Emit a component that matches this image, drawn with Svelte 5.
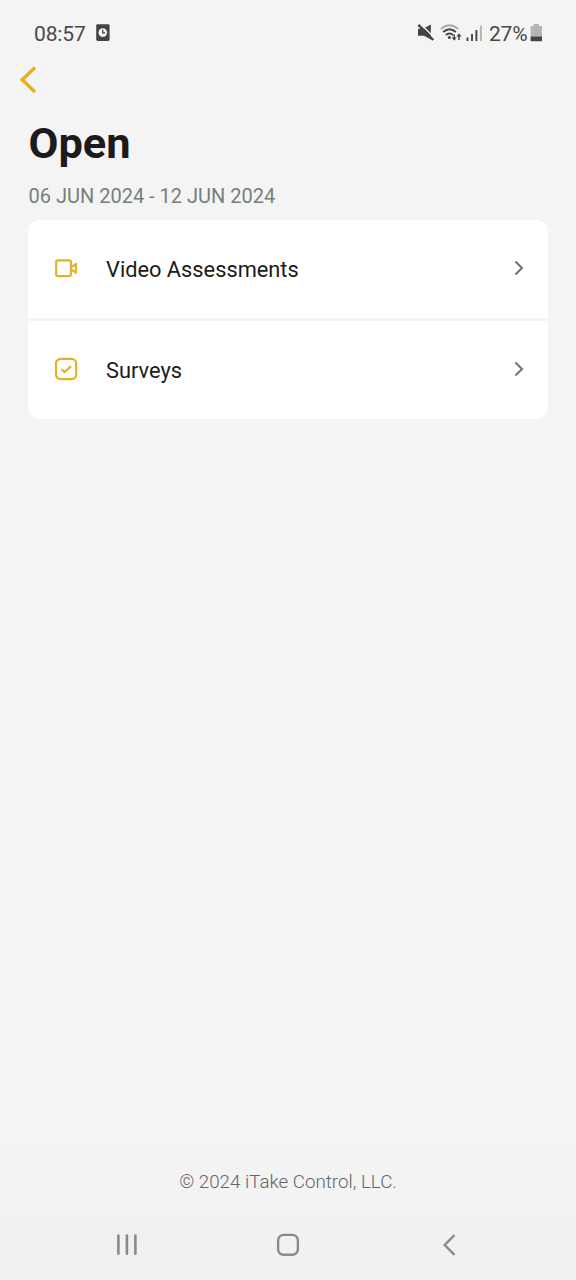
<script>
  const items = [
    { label: 'Video Assessments', icon: 'video' },
    { label: 'Surveys', icon: 'survey' }
  ];
</script>

<div class="screen">
  <header class="status">
    <span class="time">08:57</span>
    <svg class="alarm" width="14" height="18" viewBox="0 0 14 18">
      <rect x="0.2" y="0.2" width="13.4" height="16.8" rx="1.4" fill="#444" />
      <circle cx="6.8" cy="8.6" r="4.3" fill="#f4f4f4" />
      <path d="M6.7 5.8v3h2.6" fill="none" stroke="#444" stroke-width="1.3" />
    </svg>
    <svg class="mute" width="18" height="20" viewBox="0 0 18 20">
      <path d="M1 5.8h5.2L13.8 1.4V16.6L7 12.8H1z" fill="#444" />
      <path d="M3.9 1.2 17.8 15.1" stroke="#f4f4f4" stroke-width="1.4" />
      <path d="M1.4 1.8 16.2 17" stroke="#444" stroke-width="2.5" />
    </svg>
    <svg class="wifi" width="22" height="18" viewBox="0 0 22 18" fill="none" stroke="#444">
      <path d="M.8 5.2Q9.5 -2.6 18.2 5.2" stroke="#aaa" stroke-width="1.8" />
      <path d="M3.2 8Q9.5 2.4 15.8 8M5.9 11Q9.5 7.9 13.1 11" stroke-width="2" />
      <circle cx="9.3" cy="13.5" r="1.5" fill="#444" stroke="none" />
      <path d="M14.2 10.4v5M19 16v-5" stroke-width="1.5" />
      <path d="M11.8 13.5h4.8l-2.4 3.2zM16.6 12.5h4.8L19 9.3z" fill="#444" stroke="none" />
    </svg>
    <svg class="signal" width="16" height="17" viewBox="0 0 16 17">
      <path d="M1.5 12.5V16M6 9V16M10.4 5V16" stroke="#444" stroke-width="1.9" />
      <path d="M14.9 0.5V16" stroke="#b5b5b5" stroke-width="1.9" />
    </svg>
    <span class="percent">27%</span>
    <svg class="battery" width="12" height="18" viewBox="0 0 12 18">
      <path d="M3.8 0h5v2H11.3a.7.7 0 0 1 .7.7v10H.6v-10a.7.7 0 0 1 .7-.7h2.5z" fill="#b5b5b5" />
      <path d="M.6 12.6H12v3.8a.9.9 0 0 1-.9.9H1.5a.9.9 0 0 1-.9-.9z" fill="#444" />
    </svg>
  </header>

  <button class="back" aria-label="Back">
    <svg width="18" height="28" viewBox="0 0 18 28">
      <path d="M16 1.4 3.2 13.7 16 26" fill="none" stroke="#f0ad1a" stroke-width="3.5" />
    </svg>
  </button>

  <main>
    <h1>Open</h1>
    <p class="dates">06 JUN 2024 - 12 JUN 2024</p>
    <div class="list">
      {#each items as item}
        <div class="item">
          <svg class="icon" width="24" height="24" viewBox="0 0 24 24" fill="none" stroke="#e3b228" stroke-width="2.2">
            {#if item.icon === 'video'}
              <rect x="2.2" y="4.3" width="14.7" height="15.8" rx="1.3" />
              <path d="M17.5 11 22 8v8.6l-4.5-3" stroke-linejoin="round" />
            {:else}
              <rect x="2" y="1.9" width="20.2" height="20.2" rx="4.5" />
              <path d="M7.4 12.2 10.6 15.1 17 9.1" />
            {/if}
          </svg>
          <span class="label">{item.label}</span>
          <svg class="chevron" width="12" height="16" viewBox="0 0 12 16">
            <path d="M2.4 1.6 9 8 2.4 14.4" fill="none" stroke="#6f7875" stroke-width="2.1" />
          </svg>
        </div>
      {/each}
    </div>
  </main>

  <footer>© 2024 iTake Control, LLC.</footer>

  <nav>
    <svg width="24" height="24" viewBox="0 0 24 24">
      <path d="M3.4 2.6V20.8M11.9 2.6V20.8M20.4 2.6V20.8" stroke="#8a8a8a" stroke-width="2.6" stroke-linecap="round" />
    </svg>
    <svg width="24" height="24" viewBox="0 0 24 24">
      <rect x="2.1" y="1.9" width="19.8" height="19.8" rx="5.5" fill="none" stroke="#8a8a8a" stroke-width="2.4" />
    </svg>
    <svg width="24" height="24" viewBox="0 0 24 24">
      <path d="M17.5 2.2 7.7 12 17.5 21.8" fill="none" stroke="#8a8a8a" stroke-width="2.4" />
    </svg>
  </nav>
</div>

<style>
  :global(body) {
    margin: 0;
    background: #f4f4f4;
  }
  .screen {
    width: 576px;
    height: 1280px;
    display: flex;
    flex-direction: column;
    background: #f4f4f4;
    color: #1b1b1b;
    font-family: Roboto, sans-serif;
    overflow: hidden;
  }
  svg {
    display: block;
    flex: none;
  }
  .status {
    height: 64px;
    box-sizing: border-box;
    padding: 2px 34px 0;
    display: flex;
    align-items: center;
    color: #484848;
    font-size: 21px;
    line-height: 24px;
  }
  .time {
    width: 61.5px;
    letter-spacing: -0.15px;
  }
  .time,
  .percent {
    padding-top: 2px;
  }
  .mute {
    margin-left: auto;
  }
  .wifi {
    margin-left: 5px;
  }
  .signal {
    margin: 0 7px 0 4px;
  }
  .percent {
    width: 41px;
    white-space: nowrap;
    letter-spacing: -0.2px;
  }
  .back {
    width: 18px;
    height: 28px;
    margin: 2px 0 0 19px;
    padding: 0;
    border: 0;
    background: none;
  }
  main {
    flex: 1;
    padding: 24px 28px 0;
  }
  h1 {
    margin: 0 0 0 0.5px;
    font-size: 43.4px;
    line-height: 52px;
    font-weight: 700;
  }
  .dates {
    margin: 14px 0 12px 0.5px;
    font-size: 20px;
    line-height: 24px;
    color: #74807c;
  }
  .list {
    display: flex;
    flex-direction: column;
    gap: 3px;
    border-radius: 12px;
    overflow: hidden;
  }
  .item {
    height: 98px;
    box-sizing: border-box;
    padding: 0 23px 2px 26px;
    display: flex;
    align-items: center;
    background: #fff;
  }
  .label {
    flex: 1;
    margin-left: 28px;
    padding-top: 4px;
    font-size: 21.8px;
    line-height: 28px;
  }
  footer {
    height: 67px;
    box-sizing: border-box;
    padding-top: 2px;
    text-align: center;
    font-size: 18.8px;
    font-weight: 300;
    line-height: 66px;
    color: #62666b;
    background: #f3f3f3;
  }
  nav {
    height: 66px;
    box-sizing: border-box;
    padding: 0 115px 4px;
    display: flex;
    align-items: center;
    justify-content: space-between;
    background: #f1f1f1;
  }
</style>
